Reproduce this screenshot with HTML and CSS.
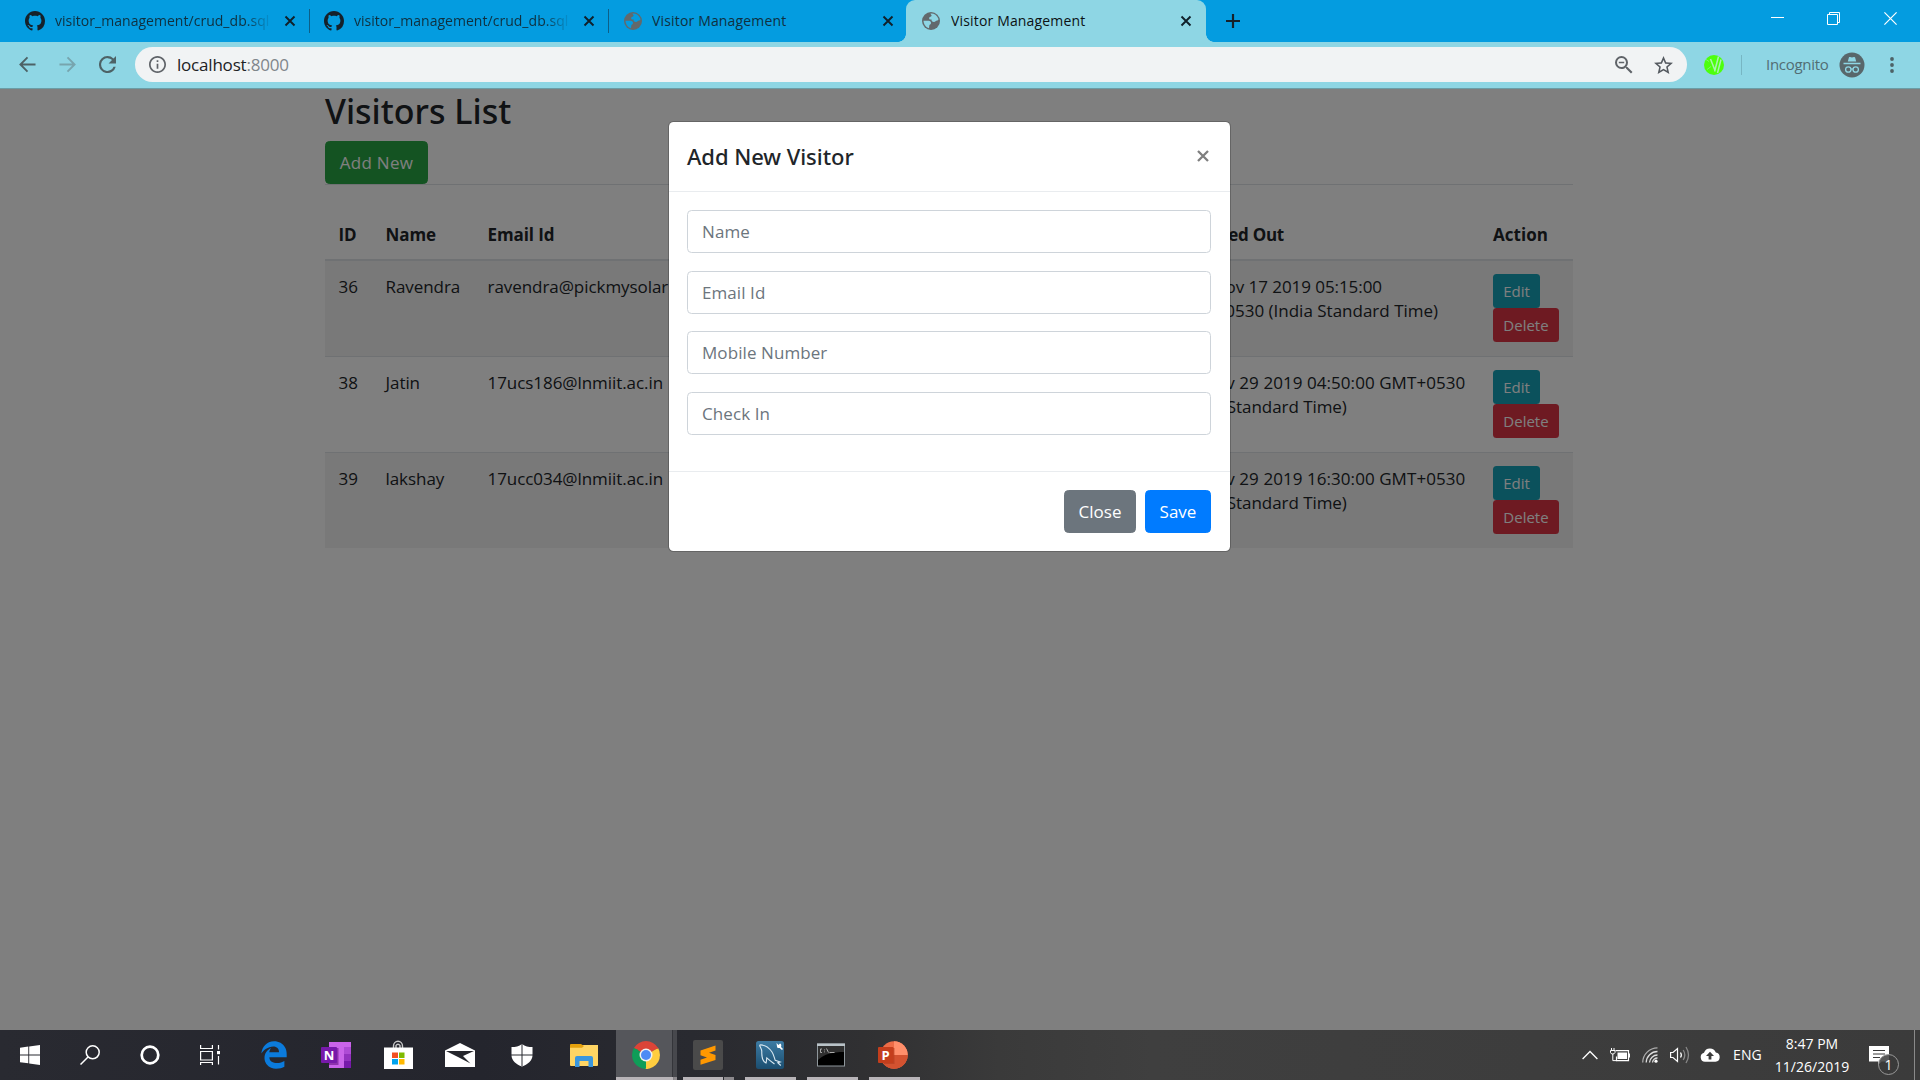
FILE: index.html
```html
<!DOCTYPE html>
<html lang="en">
<head>
<meta charset="utf-8">
<title>Visitor Management</title>
<link rel="stylesheet" href="styles.css">
</head>
<body>
<svg class="defs" width="0" height="0">
  <symbol id="github" viewBox="0 0 16 16"><path d="M8 0C3.58 0 0 3.58 0 8c0 3.54 2.29 6.53 5.47 7.59.4.07.55-.17.55-.38 0-.19-.01-.82-.01-1.49-2.01.37-2.53-.49-2.69-.94-.09-.23-.48-.94-.82-1.13-.28-.15-.68-.52-.01-.53.63-.01 1.08.58 1.23.82.72 1.21 1.87.87 2.33.66.07-.52.28-.87.51-1.07-1.78-.2-3.64-.89-3.64-3.95 0-.87.31-1.59.82-2.15-.08-.2-.36-1.02.08-2.12 0 0 .67-.21 2.2.82.64-.18 1.32-.27 2-.27s1.36.09 2 .27c1.53-1.04 2.2-.82 2.2-.82.44 1.1.16 1.92.08 2.12.51.56.82 1.27.82 2.15 0 3.07-1.87 3.75-3.65 3.95.29.25.54.73.54 1.48 0 1.07-.01 1.93-.01 2.2 0 .21.15.46.55.38A8.01 8.01 0 0 0 16 8c0-4.42-3.58-8-8-8z"/></symbol>
  <symbol id="globe" viewBox="0 0 18 18"><circle cx="9" cy="9" r="9" fill="#62696c"/><path d="M8.500 1.500C11.500 1 15 3 16.300 6.500c.3 1.200-.1 2-1 2-1.800 0-1.800 1.400-3.300 1.400-1.800 0-2.800-1-2.400-2.400-1.500.4-2.800-.3-2.400-1.800.4-1.300 2.400-.7 2.400-2.200 0-.7-.8-.9-1.100-2zM1.500 8.800h5.200c1.500 0 2.500 1.200 2.300 2.500-.2 1.200-1.500 1.100-1.700 2.300l-.3 2.600C4 15.300 1.600 12.500 1.500 8.800z" fill="currentColor"/></symbol>
  <symbol id="x" viewBox="0 0 12 12"><path d="M1.500 1.500l9 9M10.500 1.500l-9 9" stroke="currentColor" stroke-width="1.900"/></symbol>
</svg>

<header class="tabstrip">
  <div class="tab tab-first"><svg class="gh"><use href="#github"/></svg><span class="tab-title fade">visitor_management/crud_db.sql</span><svg class="tab-x"><use href="#x"/></svg></div>
  <div class="tab-sep"></div>
  <div class="tab tab-second"><svg class="gh"><use href="#github"/></svg><span class="tab-title fade">visitor_management/crud_db.sql</span><svg class="tab-x"><use href="#x"/></svg></div>
  <div class="tab-sep"></div>
  <div class="tab tab-third"><svg class="globe"><use href="#globe"/></svg><span class="tab-title">Visitor Management</span><svg class="tab-x"><use href="#x"/></svg></div>
  <div class="tab tab-active"><svg class="globe"><use href="#globe"/></svg><span class="tab-title">Visitor Management</span><svg class="tab-x"><use href="#x"/></svg></div>
  <svg class="new-tab" viewBox="0 0 16 16"><path d="M8 1v14M1 8h14" stroke="#15212a" stroke-width="2.200"/></svg>
  <div class="window-controls">
    <svg viewBox="0 0 13 13"><path d="M0 5.500h13" stroke="#fff"/></svg>
    <svg viewBox="0 0 13 13"><path d="M.5 2.500h10v10H.5zM2.500 2.500v-2h10v10h-2" fill="none" stroke="#fff"/></svg>
    <svg viewBox="0 0 13 13"><path d="M.4.400l12.200 12.200M12.600.400L.4 12.600" stroke="#fff" stroke-width="1.200"/></svg>
  </div>
</header>

<nav class="toolbar">
  <div class="nav-buttons">
    <svg viewBox="0 0 18 18"><path d="M17.500 9H2M9 1.500L1.500 9 9 16.500" fill="none" stroke="#4d6266" stroke-width="2"/></svg>
    <svg viewBox="0 0 18 18"><path d="M.5 9H16M9 1.500L16.500 9 9 16.500" fill="none" stroke="#77a5ae" stroke-width="2"/></svg>
    <svg viewBox="4 4 16 16"><path d="M17.650 6.350A7.958 7.958 0 0 0 12 4a8 8 0 1 0 7.730 10h-2.080A6 6 0 1 1 12 6c1.660 0 3.140.690 4.220 1.780L13 11h7V4l-2.350 2.350z" fill="#4d6266"/></svg>
  </div>
  <div class="omnibox">
    <svg class="info" viewBox="2 2 20 20"><path d="M11 17h2v-6h-2v6zm1-15C6.480 2 2 6.480 2 12s4.480 10 10 10 10-4.480 10-10S17.520 2 12 2zm0 18c-4.410 0-8-3.590-8-8s3.590-8 8-8 8 3.590 8 8-3.590 8-8 8zM11 9h2V7h-2v2z" fill="#5f6368"/></svg>
    <span class="url">localhost<span class="port">:8000</span></span>
    <svg class="zoom-out" viewBox="3 3 18 18"><path d="M15.500 14h-.790l-.280-.270A6.471 6.471 0 0 0 16 9.500 6.500 6.500 0 1 0 9.500 16c1.610 0 3.090-.590 4.230-1.570l.270.280v.790l5 4.990L20.490 19l-4.990-5zm-6 0C7.010 14 5 11.990 5 9.500S7.010 5 9.500 5 14 7.010 14 9.500 11.990 14 9.500 14z" fill="#5f6368"/><path d="M6.800 9.500h5.400" stroke="#5f6368" stroke-width="1.500"/></svg>
    <svg class="star" viewBox="2 2 20 19"><path d="M22 9.240l-7.190-.620L12 2 9.190 8.630 2 9.240l5.460 4.730L5.820 21 12 17.270 18.180 21l-1.630-7.030L22 9.240zM12 15.400l-3.760 2.270 1-4.280-3.320-2.880 4.380-.380L12 6.100l1.710 4.040 4.380.380-3.320 2.880 1 4.280L12 15.400z" fill="#555a60"/></svg>
  </div>
  <svg class="extension" viewBox="0 0 20 20"><circle cx="10" cy="10" r="10" fill="#4dff0d"/><path d="M6.500 4L11 15.500M14.500 1.500L10.600 16.500M17 4.500L13.500 18" stroke="#a9f3b0" stroke-width="1.500" fill="none"/><path d="M2 4.500l3 2M3 14.500l4-3" stroke="#7cf96a"/></svg>
  <div class="toolbar-sep"></div>
  <span class="incognito-label">Incognito</span>
  <svg class="incognito" viewBox="0 0 26 26"><circle cx="13" cy="13" r="12.500" fill="#58676b"/><path d="M8.800 9.600l1.100-4.100c.2-.5.700-.6 1.200-.4 1.200.5 2.600.5 3.800 0 .5-.2 1 0 1.200.4l1.100 4.100zM4.500 10.700h17v1.500h-17z" fill="#8ed6e4"/><g fill="none" stroke="#8ed6e4" stroke-width="1.300"><circle cx="9.300" cy="17.500" r="2.700"/><circle cx="16.700" cy="17.500" r="2.700"/><path d="M12 17.200q1-.7 2 0"/></g></svg>
  <svg class="menu" viewBox="0 0 4 16"><g fill="#4d6266"><circle cx="2" cy="2" r="1.900"/><circle cx="2" cy="8" r="1.900"/><circle cx="2" cy="14" r="1.900"/></g></svg>
</nav>

<main class="page">
  <div class="container">
    <h2 class="page-title">Visitors List</h2>
    <button class="btn btn-success">Add New</button>
    <table class="visitors">
      <colgroup><col class="c-id"><col class="c-name"><col class="c-email"><col class="c-mobile"><col class="c-in"><col class="c-out"><col class="c-action"></colgroup>
      <thead><tr><th>ID</th><th>Name</th><th>Email Id</th><th></th><th></th><th>Checked Out</th><th>Action</th></tr></thead>
      <tbody>
        <tr><td>36</td><td>Ravendra</td><td>ravendra@pickmysolar.com</td><td></td><td></td><td>Sun Nov 17 2019 05:15:00 <span class="nb">GMT+0530 (India Standard Time)</span></td><td><button class="btn-sm btn-info">Edit</button><button class="btn-sm btn-danger">Delete</button></td></tr>
        <tr><td>38</td><td>Jatin</td><td>17ucs186@lnmiit.ac.in</td><td></td><td></td><td><span class="date">Fri Nov 29 2019 04:50:00 GMT+0530</span> (India Standard Time)</td><td><button class="btn-sm btn-info">Edit</button><button class="btn-sm btn-danger">Delete</button></td></tr>
        <tr><td>39</td><td>lakshay</td><td>17ucc034@lnmiit.ac.in</td><td></td><td></td><td><span class="date">Fri Nov 29 2019 16:30:00 GMT+0530</span> (India Standard Time)</td><td><button class="btn-sm btn-info">Edit</button><button class="btn-sm btn-danger">Delete</button></td></tr>
      </tbody>
    </table>
  </div>
  <div class="backdrop">
    <div class="modal">
      <div class="modal-header"><h5 class="modal-title">Add New Visitor</h5><svg class="modal-x" viewBox="0 0 12 12"><path d="M1 1l10 10M11 1L1 11" stroke="#7f7f7f" stroke-width="2.300"/></svg></div>
      <div class="modal-body">
        <input class="field" placeholder="Name">
        <input class="field" placeholder="Email Id">
        <input class="field" placeholder="Mobile Number">
        <input class="field" placeholder="Check In">
      </div>
      <div class="modal-footer"><button class="btn btn-secondary">Close</button><button class="btn btn-primary">Save</button></div>
    </div>
  </div>
</main>

<footer class="taskbar">
  <div class="sys"><svg width="20" height="20" viewBox="0 0 20 20"><path d="M0 2.800L8.300 1.600v7.900H0zM9.200 1.500L20 0v9.500H9.200zM0 10.400h8.300v7.900L0 17.200zM9.200 10.400H20V20L9.200 18.500z" fill="#fff"/></svg></div>
  <div class="sys"><svg width="20" height="20" viewBox="0 0 20 20"><g fill="none" stroke="#fff" stroke-width="1.500"><circle cx="12.700" cy="7.300" r="6.500"/><path d="M8 12L.5 19.500"/></g></svg></div>
  <div class="sys"><svg width="20" height="20" viewBox="0 0 20 20"><circle cx="10" cy="10" r="8.300" fill="none" stroke="#fff" stroke-width="2.700"/></svg></div>
  <div class="sys"><svg width="20" height="20" viewBox="0 0 20 20"><path d="M.6 0v3.500h11.800V0M.6 6.500h11.800v8.500H.6zM.6 20v-2.500h11.800V20M18.500 0v4.500M18.500 11v8.500" fill="none" stroke="#fff" stroke-width="1.200"/><path d="M17 6h3v3.200h-3z" fill="#fff"/></svg></div>
  <div class="apps">
    <div class="app"><svg width="26" height="28" viewBox="20 4 472 504"><path d="M25.710 228.160l.350-.480c0 .160 0 .320-.070.480zm460.580 15.510c0-44-7.760-84.460-28.810-122.400C416.500 47.880 343.910 8 258.890 8 119 7.720 40.620 113.210 26.060 227.680c42.420-61.310 117.070-121.380 220.370-125 0 0 109.670 0 99.420 105H170c6.370-37.390 18.550-59 34.340-78.930-75.050 34.900-121.850 96.100-120.750 188.320.830 71.450 50.130 144.840 120.750 172 83.350 31.840 192.770 7.200 240.130-21.330V363.310C363.600 419.800 173.600 424.230 172.210 295.740H486.290V243.670Z" fill="#0b7bdc"/></svg></div>
    <div class="app"><svg width="30" height="28" viewBox="0 0 30 28"><path d="M8 1h22v26H8z" fill="#ca64ea"/><path d="M23 6h7v7h-7z" fill="#ae4bd5"/><path d="M23 13h7v7h-7z" fill="#9332bf"/><path d="M23 20h7v7h-7z" fill="#7719aa"/><path d="M8 7h9.500v17H8z" fill="#8d32ad"/><rect y="6" width="16" height="16" rx="1" fill="#7719aa"/><text x="8" y="18.500" text-anchor="middle" class="glyph glyph-n">N</text></svg></div>
    <div class="app"><svg width="30" height="30" viewBox="0 0 30 30"><path d="M10.500 8V6a4.500 4.800 0 0 1 9 0v2M13 8V5.500a2.500 3 0 0 1 4 0V8" fill="none" stroke="#c9c9c9" stroke-width="1.400"/><path d="M1 7.500h29V29H1z" fill="#fff"/><path d="M9 12.500h6v5.500H9z" fill="#f25022"/><path d="M16 12.500h5.500v5.500H16z" fill="#7fba00"/><path d="M9 19h6v5.500H9z" fill="#00a4ef"/><path d="M16 19h5.500v5.500H16z" fill="#ffb900"/></svg></div>
    <div class="app"><svg width="30" height="26" viewBox="0 0 30 26"><path d="M0 8.500L15 1l15 7.500V25H0z" fill="#fff"/><path d="M1 9h28l-11 5 7.500 7.500L13 15z" fill="#25262c"/></svg></div>
    <div class="app"><svg width="22" height="24" viewBox="0 0 22 24"><path d="M11 1c3 2.500 6.500 3 10.500 3v8.500c0 5-5 9-10.500 11C5.500 21.500.5 17.500.5 12.500V4C4.500 4 8 3.500 11 1z" fill="#fff"/><path d="M11 1v22M0 12h22" stroke="#292a30"/></svg></div>
    <div class="app"><svg width="28" height="26" viewBox="0 0 28 26"><path d="M0 3h28v20a1 1 0 0 1-1 1H1a1 1 0 0 1-1-1z" fill="#ffd563"/><path d="M0 3a1 1 0 0 1 1-1h10l3 2-2 1.800H0z" fill="#e5a10c"/><path d="M5 25V16a2 2 0 0 1 2-2h14a2 2 0 0 1 2 2v9h-4.500v-6h-9v6z" fill="#3a96dd"/></svg></div>
    <div class="app running current"><svg width="28" height="28" viewBox="0 0 28 28"><path d="M14 14L1.900 7A14 14 0 0 1 26.100 7z" fill="#db4437"/><path d="M14 14L26.100 7A14 14 0 0 1 14 28z" fill="#ffcd40"/><path d="M14 14v14A14 14 0 0 1 1.900 7z" fill="#0f9d58"/><path d="M14 7.700h12.500l-.6-1H14z" fill="#db4437"/><path d="M19.500 17.200L13.500 28h2l9-8z" fill="#ffcd40"/><path d="M8.500 17.200L1.700 7.400l4 1z" fill="#0f9d58"/><circle cx="14" cy="14" r="6.500" fill="#f1f1f1"/><circle cx="14" cy="14" r="5" fill="#4c8bf5"/></svg></div>
    <div class="app running split"><svg width="30" height="30" viewBox="0 0 30 30"><rect width="30" height="30" rx="2" fill="#4a4a4a"/><path d="M7.500 10.500L22.500 5.500v5l-6.500 2.200 6.500 2.300v5L7.500 24.700v-5l6.500-2.200-6.500-2.300z" fill="#ff9800"/></svg></div>
    <div class="app running"><svg width="28" height="28" viewBox="0 0 28 28"><defs><linearGradient id="db" x2="0" y2="1"><stop stop-color="#3d7ba3"/><stop offset="1" stop-color="#1b4e70"/></linearGradient></defs><rect width="28" height="28" rx="2.500" fill="url(#db)"/><path d="M3.500 4c4-.5 9 2 12.500 7 1.800 2.600 2.200 5.600 3.200 8.200l5 1.800-2.400.7 3 2.800M3.500 4c.8 2.600 2.500 4 2.300 7-.2 4.500 1.200 9.500 4.200 11 .6-1.700.5-3.400.8-5.200 1.800 1.600 4.200 3.600 7.700 6.200" fill="none" stroke="#d9e8f1" stroke-width="1.100"/><path d="M20.500 2l2 2 1.500-1.500c1.500.5 1.500 2.500 1 3.500l2 2-1 1-2.400-2c-1.500.3-2.600-.3-2.600-1.500z" fill="#fff"/></svg></div>
    <div class="app running"><svg class="console" width="28" height="24" viewBox="0 0 28 24"><rect x=".5" y="1" width="27" height="22" fill="#000" stroke="#8f979c"/><path d="M0 .5h28v2.500H0z" fill="#b9c2c7"/><path d="M1 3h26v6C16 9 7 11 1 17z" fill="#303030"/><path d="M5 6H3.500v3.500H5M7.500 6.500v.8M7.500 8.500v.8M9.500 5.500l2 4M12.500 9.500h5" fill="none" stroke="#aaa"/></svg></div>
    <div class="app running"><svg class="slides" width="30" height="28" viewBox="0 0 30 28"><circle cx="16" cy="14" r="13.700" fill="#ed6c47"/><path d="M16 .3A13.700 13.700 0 0 1 29.700 14H16z" fill="#ff8f6b"/><path d="M2.300 14h27.400A13.700 13.700 0 0 1 2.300 14z" fill="#d35230"/><path d="M4 7h12.500v16H6z" fill="#b13d20" opacity=".6"/><rect y="6" width="15.500" height="16" rx="1" fill="#c43e1c"/><text x="7.500" y="18.500" text-anchor="middle" class="glyph">P</text></svg></div>
  </div>
  <div class="tray">
    <div class="tray-icon"><svg width="16" height="10" viewBox="0 0 16 10"><path d="M.6 9L8 1.500 15.400 9" fill="none" stroke="#fff" stroke-width="1.300"/></svg></div>
    <div class="tray-icon"><svg width="20" height="14" viewBox="0 0 20 14"><path d="M5.500 2.600h13v10h-12V8.500M19.500 5.500v4" fill="none" stroke="#fff" stroke-width="1.200"/><path d="M7.500 4.500h9.500V11H7.500z" fill="#fff"/><path d="M1.500 0v2M4 0v2M.5 2.500h4.500v2q-.5 1.500-2.200 1.500Q.8 6 .5 4.500zM2.800 6v6.600H7" fill="none" stroke="#fff"/></svg></div>
    <div class="tray-icon"><svg width="16" height="16" viewBox="0 0 16 16"><g fill="none" stroke="#ddd" stroke-width="1.300"><path d="M.7 15.500A15 15 0 0 1 15.500.8" opacity=".7"/><path d="M4.200 15.500A11.300 11.300 0 0 1 15.500 4.500M7.500 15.500A8 8 0 0 1 15.500 8M10.500 15.500A5 5 0 0 1 15.500 11"/></g><circle cx="14" cy="14.200" r="1.600" fill="#fff"/></svg></div>
    <div class="tray-icon"><svg width="20" height="18" viewBox="0 0 20 18"><path d="M.6 6.500H3L7.500 2.500v13L3 11.500H.6z" fill="none" stroke="#fff" stroke-width="1.200"/><path d="M10.500 6.500q1.700 2.500 0 5" fill="none" stroke="#fff" stroke-width="1.300"/><path d="M13.200 4q3.200 5 0 10M16 1q5 8 0 16" fill="none" stroke="#888" stroke-width="1.300"/></svg></div>
    <div class="tray-icon"><svg width="20" height="14" viewBox="0 0 20 14"><path d="M5 13.800A4.600 4.600 0 0 1 4 4.800 6.300 6.300 0 0 1 15.800 4.500 4.700 4.700 0 0 1 15.500 13.800z" fill="#fff"/><path d="M10 3.800l4 4.200h-2.600v3.500H8.600V8H6z" fill="#3c3c3c"/></svg></div>
    <span class="lang">ENG</span>
    <div class="clock"><span>8:47 PM</span><span>11/26/2019</span></div>
    <div class="notify"><svg width="20" height="19" viewBox="0 0 20 19"><path d="M0 0h20v15.500h-7.500L9 19v-3.500H0z" fill="#fff"/><path d="M4 4.500h12M4 8h12M4 11.500h7" stroke="#3b3b3b" stroke-width="1.200"/></svg><span class="count">1</span></div>
    <div class="show-desktop"></div>
  </div>
</footer>
</body>
</html>
```
FILE: styles.css
```css
* { box-sizing: border-box; }
body {
  margin: 0; width: 1920px; height: 1080px; overflow: hidden;
  display: flex; flex-direction: column;
  font: 17px/24px "Open Sans", "Noto Sans", sans-serif; color: #212529;
}
svg { display: block; flex: none; }
.defs { position: absolute; }

/* browser tabs */
.tabstrip { height: 42px; background: #049ce0; display: flex; align-items: center; }
.tab { height: 42px; display: flex; align-items: center; gap: 10px; padding-right: 14px; color: #049ce0; }
.tab-first { width: 309px; padding-left: 25px; padding-right: 13px; }
.tab-second { width: 298px; padding-left: 14px; padding-right: 13px; }
.tab-third { width: 297px; padding-left: 15px; padding-right: 12px; }
.tab-active {
  position: relative; width: 300px; padding-left: 16px; gap: 11px;
  background: #8ed6e4; color: #8ed6e4; border-radius: 9px 9px 0 0;
}
.tab-active::before, .tab-active::after {
  content: ""; position: absolute; bottom: 0; width: 8px; height: 8px;
}
.tab-active::before { left: -8px; background: radial-gradient(circle at 0 0, transparent 7.5px, #8ed6e4 8px); }
.tab-active::after { right: -8px; background: radial-gradient(circle at 100% 0, transparent 7.5px, #8ed6e4 8px); }
.tab-sep { width: 1px; height: 24px; background: #0d5f87; }
.gh { width: 20px; height: 20px; fill: #15212a; }
.globe { width: 18px; height: 18px; }
.tab-title { flex: 1; overflow: hidden; white-space: nowrap; font-size: 14px; color: #10303f; letter-spacing: .16px; line-height: 20px; }
.tab-active .tab-title { color: #0c1214; }
.tab .fade { flex: 0 0 215px; margin-right: auto; letter-spacing: .03px; -webkit-mask-image: linear-gradient(to right, #000 190px, transparent 217px); mask-image: linear-gradient(to right, #000 190px, transparent 217px); }
.tab-x { width: 12px; height: 12px; color: #10202a; }
.new-tab { width: 16px; height: 16px; margin-left: 19px; }
.window-controls { display: flex; gap: 44px; margin: -5px 23px 0 auto; }
.window-controls svg { width: 13px; height: 13px; }
.window-controls svg:first-child { margin-right: -1px; }

/* toolbar */
.toolbar { height: 47px; padding-bottom: 1px; background: #8ed6e4; border-bottom: 1px solid #6b9da6; display: flex; align-items: center; }
.nav-buttons { display: flex; gap: 23px; padding-left: 19px; }
.nav-buttons svg { width: 17px; height: 17px; }
.omnibox { width: 1552px; height: 35px; margin-left: 19px; padding: 0 14px; border-radius: 18px; background: #f1f3f4; display: flex; align-items: center; }
.info { width: 17px; height: 17px; }
.url { margin-left: 11px; letter-spacing: -.2px; color: #202124; }
.port { color: #80868b; }
.zoom-out { width: 18px; height: 18px; margin-left: auto; }
.star { width: 19px; height: 18px; margin-left: 21px; }
.extension { width: 20px; height: 20px; margin-left: 17px; }
.toolbar-sep { width: 1px; height: 20px; margin-left: 17px; background: #77b6c3; }
.incognito-label { width: 65px; margin: -1px 0 0 24px; font-size: 15px; letter-spacing: -.3px; color: #526d73; }
.incognito { width: 26px; height: 26px; margin-left: 8px; }
.menu { width: 4px; height: 16px; margin-left: 25px; }

/* page */
.page { position: relative; height: 941px; background: #fff; }
.container { width: 1248px; margin-left: 325px; }
.page-title { margin: 0 0 9px; font: 500 34px/43px "Noto Sans", sans-serif; padding-top: 1px; height: 43px; }
.btn { display: block; height: 43px; padding: 0 13px; border: 1px solid; border-radius: 4.500px; font: inherit; color: #fff; }
.btn-success { width: 103px; padding: 0; letter-spacing: .3px; background: #28a745; border-color: #28a745; }
.visitors { width: 1248px; table-layout: fixed; border-collapse: separate; border-spacing: 0; border-top: 1px solid #dee2e6; padding-top: 23px; }
.visitors th, .visitors td { padding: 14px 0 0 13.500px; text-align: left; vertical-align: top; font-size: 17px; letter-spacing: -.06px; }
.visitors th { height: 53px; padding-top: 15px; border-bottom: 2px solid #dee2e6; letter-spacing: -.1px; white-space: nowrap; }
.visitors th:nth-child(n+6) { letter-spacing: .05px; }
.visitors td { height: 96px; border-top: 1px solid #dee2e6; }
.visitors td:last-child { padding: 13px 0 0 14px; }
.visitors th:last-child { padding-left: 14px; }
.visitors th:nth-child(6) { letter-spacing: -.3px; }
.visitors tbody tr:first-child td { height: 95px; border-top: 0; }
.visitors tbody tr:nth-child(odd) { background: rgba(0, 0, 0, .05); }
.visitors td:nth-child(6) { letter-spacing: -.06px; }
.nb { display: block; letter-spacing: 0; }
.date { display: block; letter-spacing: .06px; }
.c-id { width: 47px; } .c-name { width: 102px; } .c-email { width: 251px; } .c-mobile { width: 126px; }
.c-in { width: 314px; } .c-out { width: 314px; } .c-action { width: 94px; }
.btn-sm { display: block; height: 34px; padding: 0; border: 0; border-radius: 3.500px; font: 15px/20px "Open Sans", sans-serif; color: #fff; }
.btn-info { width: 47px; background: #17a2b8; }
.btn-danger { width: 66px; background: #dc3545; }

/* dialog */
.backdrop { position: absolute; inset: 0; background: rgba(0, 0, 0, .5); }
.modal { width: 563px; margin: 32px 0 0 668px; background: #fff; background-clip: padding-box; border: 1px solid rgba(0, 0, 0, .2); border-radius: 5.500px; }
.modal-header { height: 70px; padding: 0 21px 0 18px; border-bottom: 1px solid #e9ecef; display: flex; align-items: center; justify-content: space-between; }
.modal-title { margin: -1px 0 0; font: 500 22px/30px "Noto Sans", sans-serif; letter-spacing: -.05px; }
.modal-x { width: 12px; height: 12px; margin-top: -1px; }
.modal-body { padding: 18px 19px 36px 18px; display: flex; flex-direction: column; gap: 17.600px; }
.field { height: 43px; width: 100%; padding: 0 14px; border: 1px solid #ced4da; border-radius: 4.500px; font: inherit; letter-spacing: .08px; }
.field::placeholder { color: #6c757d; opacity: 1; }
.modal-footer { padding: 18px 19px 18px 18px; border-top: 1px solid #e9ecef; display: flex; justify-content: flex-end; gap: 9px; }
.btn-secondary { width: 72px; padding: 1px 0 0; background: #6c757d; border-color: #6c757d; }
.btn-primary { width: 66px; padding: 1px 0 0; background: #007bff; border-color: #007bff; }

/* taskbar */
.taskbar { height: 50px; display: flex; color: #fff; background: linear-gradient(to right, #292a31, #24252d 25%, #292a30 36%, #303032 45%, #3a3a3a 52%, #3f3f3f 60%, #3b3b3b); }
.sys { width: 60px; display: flex; align-items: center; justify-content: center; }
.apps { display: flex; margin-left: 3px; }
.app { width: 62px; height: 50px; display: flex; align-items: center; justify-content: center; }
.running { background: linear-gradient(#b8b4b8, #b8b4b8) 6px 47px / 51px 3px no-repeat; }
.split { background: linear-gradient(to right, #b8b4b8 40px, transparent 40px, transparent 41px, #8c898d 41px) 6px 47px / 51px 3px no-repeat; }
.current {
  background:
    linear-gradient(to right, #b8b4b8 57px, #777579 57px, #8c898d 58px) 1px 47px / 61px 3px no-repeat,
    linear-gradient(to right, #55565b 56px, #34353a 56px, #34353a 57px, #47484d 57px) 1px 0 / 61px 50px no-repeat;
}
.console, .slides { margin-right: 2px; }
.glyph { font: 700 13px "Open Sans", sans-serif; fill: #fff; }
.tray { display: flex; align-items: center; margin-left: auto; }
.tray-icon { width: 30px; display: flex; justify-content: center; }
.lang { width: 44px; padding-left: 1px; text-align: center; font-size: 14px; letter-spacing: .1px; }
.clock { width: 86px; display: flex; flex-direction: column; align-items: center; font-size: 14px; line-height: 23px; }
.notify { position: relative; width: 59px; padding-left: 14px; }
.count { position: absolute; left: 23px; top: 8px; width: 21px; height: 21px; border: 1px solid #999; border-radius: 50%; background: rgba(59, 59, 59, .85); text-align: center; font-size: 14px; line-height: 19px; }
.show-desktop { width: 6px; height: 50px; border-left: 1px solid #8a8a8a; }
```
